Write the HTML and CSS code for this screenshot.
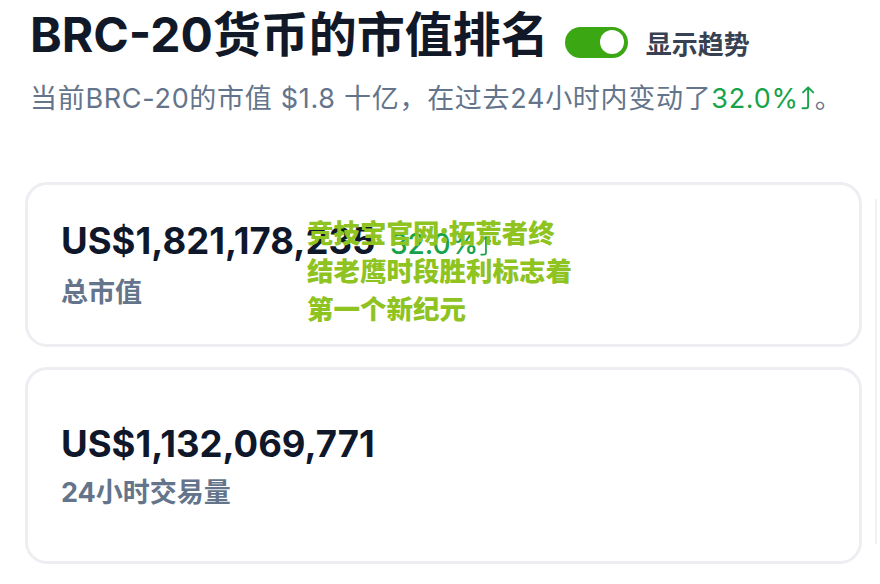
FILE: index.html
```html
<!DOCTYPE html>
<html lang="zh">
<head>
    <meta charset="UTF-8">
    <meta name="viewport" content="width=device-width, initial-scale=1.0">
    <title>BRC-20货币的市值排名</title>
    <link rel="stylesheet" href="styles.css">
</head>
<body>
    <div class="page">
        <header class="head">
            <div class="title-row">
                <h1>BRC-20货币的市值排名</h1>
                <label class="toggle">
                    <span class="switch"><span class="knob"></span></span>
                    <span class="toggle-text">显示趋势</span>
                </label>
            </div>
            <p class="summary">当前BRC-20的市值 $1.8 十亿，在过去24小时内变动了<span class="up">32.0%<svg class="arrow" viewBox="0 0 14 24" width="16" height="27"><path d="M8 3 V19.5 Q8 21.5 6 21.5 H3 M3.5 7.5 L8 3 L12.5 7.5" fill="none" stroke="currentColor" stroke-width="1.7" stroke-linecap="round" stroke-linejoin="round"/></svg></span>。</p>
        </header>

        <div class="board">
            <div class="stats">
                <div class="card card-cap">
                    <div class="value">US$1,821,178,235 <span class="up small">32.0%<svg class="arrow" viewBox="0 0 14 24" width="14" height="23"><path d="M8 3 V19.5 Q8 21.5 6 21.5 H3 M3.5 7.5 L8 3 L12.5 7.5" fill="none" stroke="currentColor" stroke-width="1.8" stroke-linecap="round" stroke-linejoin="round"/></svg></span></div>
                    <div class="label">总市值</div>
                </div>
                <div class="card card-vol">
                    <div class="value">US$1,132,069,771</div>
                    <div class="label">24小时交易量</div>
                </div>
            </div>
            <div class="side"></div>
        </div>

        <div class="promo">竞技宝官网:拓荒者终结老鹰时段胜利标志着第一个新纪元</div>
    </div>
</body>
</html>
```

FILE: styles.css
```css
body {
    margin: 0;
    background: #fff;
    font-family: Inter, "Noto Sans CJK SC", sans-serif;
    color: #111827;
    overflow: hidden;
}
.page {
    position: relative;
    padding: 0 0 0 25px;
}
.head {
    padding: 6px 0 0 5px;
}
.title-row {
    display: flex;
    align-items: center;
    gap: 16px;
}
h1 {
    margin: 0;
    font-size: 48px;
    line-height: 58px;
    font-weight: 700;
    color: #111827;
    white-space: nowrap;
}
.toggle {
    display: flex;
    align-items: center;
    gap: 18px;
    margin-top: 14px;
}
.switch {
    width: 63px;
    height: 31px;
    border-radius: 16px;
    background: #3ba813;
    display: flex;
    align-items: center;
    justify-content: flex-end;
    padding: 0 4px;
    box-sizing: border-box;
}
.knob {
    width: 24px;
    height: 24px;
    border-radius: 50%;
    background: #fff;
}
.toggle-text {
    font-size: 26px;
    font-weight: 700;
    color: #374151;
}
.summary {
    margin: 17px 0 0;
    font-size: 27px;
    line-height: 36px;
    letter-spacing: 0.7px;
    color: #64748b;
    white-space: nowrap;
}
.up {
    color: #16a34a;
}
.arrow {
    vertical-align: -3px;
}
.board {
    display: flex;
    gap: 13px;
    margin-top: 65px;
}
.stats {
    display: flex;
    flex-direction: column;
    gap: 20px;
    width: 837px;
}
.card {
    border: 3px solid #eceef2;
    border-radius: 22px;
    box-sizing: border-box;
    display: flex;
    flex-direction: column;
    justify-content: center;
    padding: 0 33px;
}
.card-cap {
    height: 165px;
}
.card-vol {
    height: 197px;
}
.value {
    font-size: 36.5px;
    line-height: 44px;
    font-weight: 700;
    color: #0f172a;
}
.value .small {
    font-size: 28px;
    font-weight: 500;
    margin-left: 6px;
}
.label {
    margin-top: 10px;
    font-size: 27px;
    line-height: 34px;
    font-weight: 700;
    color: #64748b;
}
.side {
    width: 2px;
    height: 345px;
    margin-top: 17px;
    background: #f1f2f5;
}
.promo {
    position: absolute;
    left: 307px;
    top: 213px;
    width: 270px;
    font-family: "Noto Sans CJK SC", sans-serif;
    font-size: 26.5px;
    line-height: 38px;
    font-weight: 900;
    color: #8fc31f;
}
```
